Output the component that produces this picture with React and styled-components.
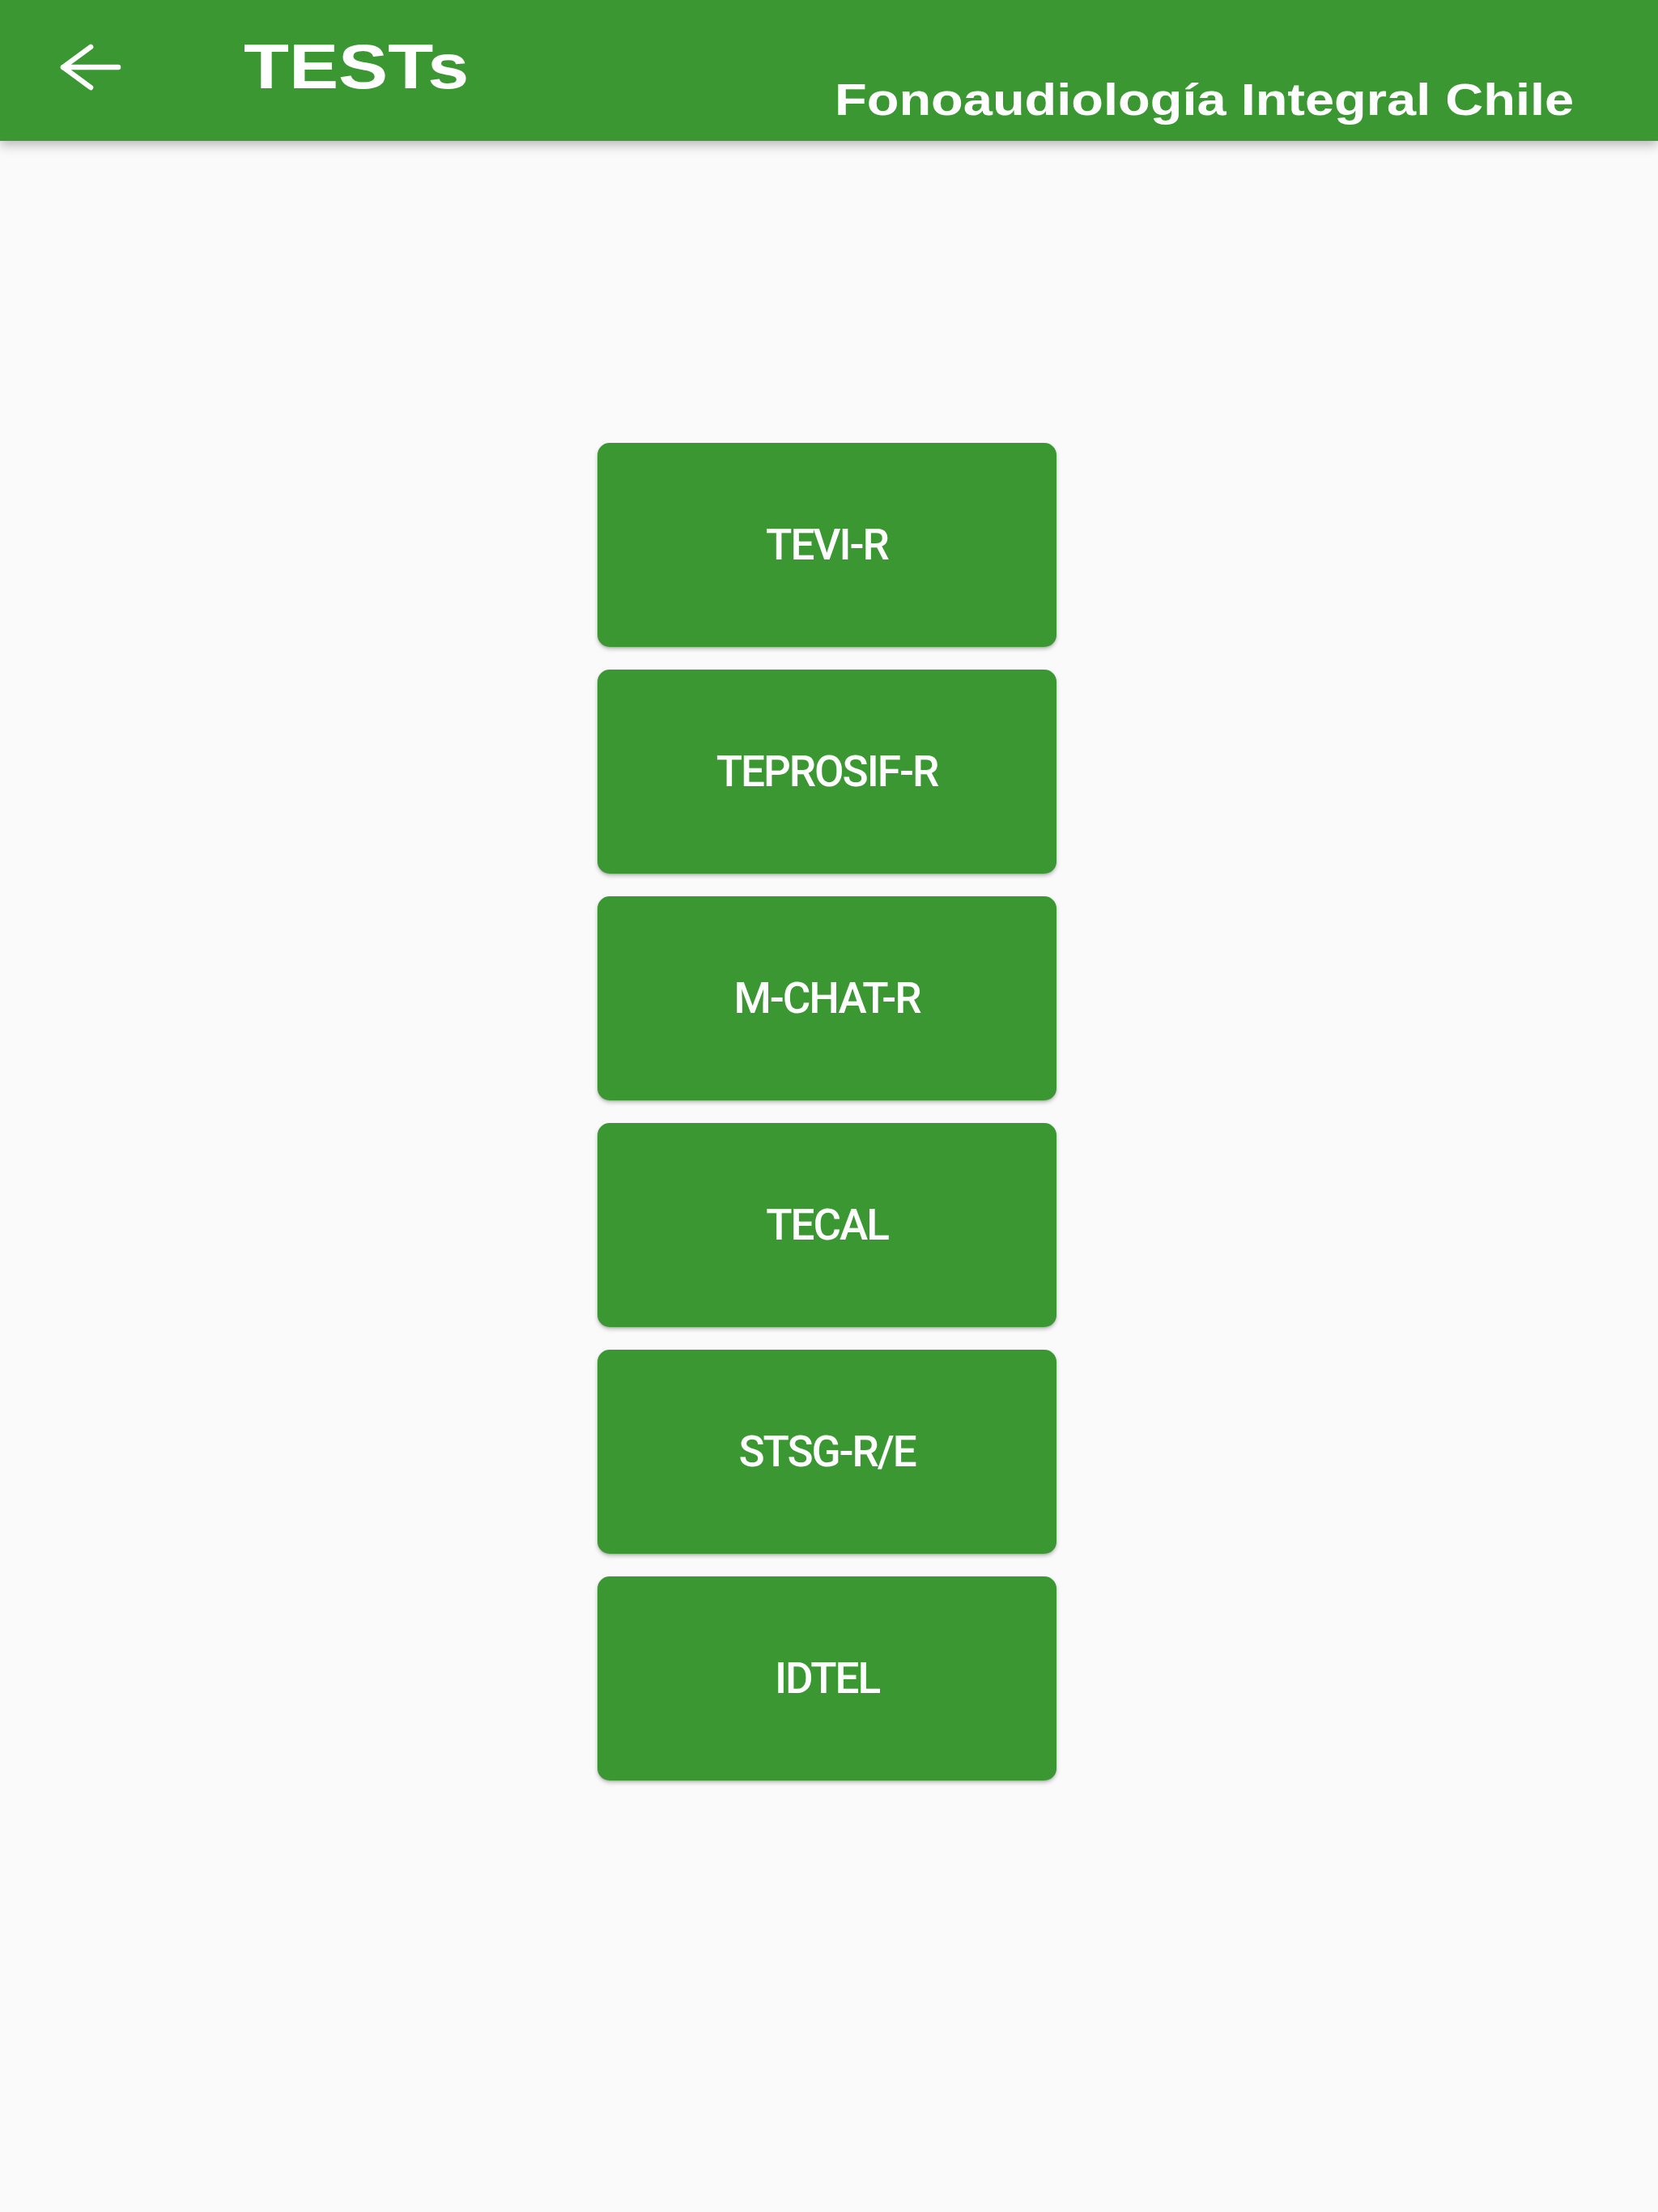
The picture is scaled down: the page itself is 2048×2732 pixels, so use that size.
import React from 'react';
import styled, {createGlobalStyle} from 'styled-components';

const GREEN = '#3a9732';

const GlobalStyle = createGlobalStyle`
  html, body {
    margin: 0;
    padding: 0;
    background: #fafafa;
  }
  #root {
    min-height: 2732px;
    background: #fafafa;
  }
`;

const Page = styled.div`
  min-height: 2732px;
  display: flex;
  flex-direction: column;
  background: #fafafa;
`;

const AppBar = styled.header`
  position: relative;
  z-index: 2;
  height: 174px;
  display: flex;
  align-items: flex-start;
  padding: 0 104px 0 72px;
  background: ${GREEN};
  box-shadow: 0 4px 14px rgba(0, 0, 0, 0.3);
  box-sizing: border-box;
`;

const BackButton = styled.button`
  margin-top: 54px;
  padding: 0;
  border: 0;
  background: transparent;
  cursor: pointer;
  display: flex;
`;

const Title = styled.h1`
  margin: 44px 0 0 151px;
  font-family: "Liberation Sans", Arial, sans-serif;
  font-weight: 700;
  font-size: 77px;
  line-height: 1;
  color: #fff;
  transform: scaleX(1.19);
  transform-origin: left center;
`;

const Spacer = styled.div`
  flex: 1;
`;

const Subtitle = styled.div`
  margin-top: 95px;
  font-family: "Liberation Sans", Arial, sans-serif;
  font-weight: 700;
  font-size: 56px;
  line-height: 1;
  color: #fff;
  white-space: nowrap;
  transform: scaleX(1.16);
  transform-origin: right center;
`;

const Content = styled.main`
  display: flex;
  flex-direction: column;
  align-items: center;
  gap: 28px;
  padding: 373px 0 0 0;
  margin-left: -5px;
`;

const TestButton = styled.button`
  width: 567px;
  height: 252px;
  border: 0;
  border-radius: 15px;
  background: ${GREEN};
  color: #fff;
  font-family: Roboto, "Noto Sans", sans-serif;
  font-weight: 500;
  font-size: 53px;
  letter-spacing: -2px;
  cursor: pointer;
  box-shadow: 0 3px 5px rgba(0, 0, 0, 0.22), 0 1px 2px rgba(0, 0, 0, 0.14);
`;

const BackArrow = () => (
  <svg width="78" height="58" viewBox="0 0 78 58" fill="none">
    <path
      d="M6 29 H74 M6 29 L40 4 M6 29 L40 54"
      stroke="#fff"
      strokeWidth="6.5"
      strokeLinecap="round"
      strokeLinejoin="round"
    />
  </svg>
);

const tests = ['TEVI-R', 'TEPROSIF-R', 'M-CHAT-R', 'TECAL', 'STSG-R/E', 'IDTEL'];

export default function App() {
  return (
    <Page>
      <GlobalStyle />
      <AppBar>
        <BackButton aria-label="Volver">
          <BackArrow />
        </BackButton>
        <Title>TESTs</Title>
        <Spacer />
        <Subtitle>Fonoaudiología Integral Chile</Subtitle>
      </AppBar>
      <Content>
        {tests.map(name => (
          <TestButton key={name}>{name}</TestButton>
        ))}
      </Content>
    </Page>
  );
}
